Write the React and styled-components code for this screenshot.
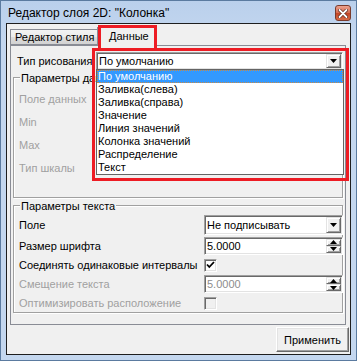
import React from "react";
import styled, { createGlobalStyle } from "styled-components";

const GlobalStyle = createGlobalStyle`
  html, body { margin: 0; padding: 0; background: #fff; }
  body {
    font-family: "Liberation Sans", Arial, sans-serif;
    font-size: 11px;
    color: #000;
  }
`;

const Window = styled.div`
  position: relative;
  width: 357px;
  height: 361px;
  box-sizing: border-box;
  border: 1px solid #5b7ba0;
  background: linear-gradient(#bad0ec, #c4d7ef 40px);
  display: flex;
  flex-direction: column;
`;

const TitleBar = styled.div`
  height: 22px;
  display: flex;
  align-items: flex-start;
  justify-content: space-between;
  padding: 0 5px 0 7px;
`;

const Title = styled.span`
  font-size: 12px;
  line-height: 22px;
  padding-top: 1px;
  color: #000;
`;

const CloseButton = styled.div`
  width: 16px;
  height: 16px;
  margin-top: 4px;
  display: grid;
  place-items: center;
  box-sizing: border-box;
  border: 1px solid #7a3b2c;
  border-radius: 3px;
  background: linear-gradient(#eba28f, #d5694d 50%, #c24526 51%, #d76a45);
`;

const Client = styled.div`
  flex: 1;
  margin: 0 5px 5px;
  border: 1px solid #1e1e1e;
  background: #f0f0f0;
  display: flex;
  flex-direction: column;
`;

const TabStrip = styled.div`
  height: 21px;
  display: flex;
  align-items: flex-end;
  padding: 0 0 0 3px;
  position: relative;
  z-index: 1;
`;

const Tab = styled.div`
  box-sizing: border-box;
  height: ${({ $active }) => ($active ? 19 : 16)}px;
  width: ${({ $w }) => $w}px;
  margin-bottom: ${({ $active }) => ($active ? -1 : 0)}px;
  margin-left: ${({ $active }) => ($active ? -1 : 0)}px;
  padding-left: ${({ $pad }) => $pad}px;
  border: 1px solid #898c95;
  border-bottom: ${({ $active }) => ($active ? "none" : "1px solid #898c95")};
  background: ${({ $active }) =>
    $active ? "#f0f0f0" : "linear-gradient(#f3f3f3, #ebebeb 50%, #dddddd 51%, #d2d2d2)"};
  line-height: ${({ $active }) => ($active ? 17 : 15)}px;
  white-space: nowrap;
`;

const Panel = styled.div`
  position: relative;
  height: 280px;
  box-sizing: border-box;
  margin: 0 4px 0 3px;
  border: 1px solid #898c95;
  background: #f0f0f0;
  display: flex;
  flex-direction: column;
  padding: 0 1px;
`;

const TypeRow = styled.div`
  display: flex;
  align-items: center;
  height: 18px;
  margin-top: 6px;
  padding-left: 5px;
  position: relative;
  z-index: 2;
`;

const Label = styled.span`
  color: ${({ $disabled }) => ($disabled ? "#a0a0a0" : "#000")};
  width: ${({ $w }) => ($w ? `${$w}px` : "auto")};
  flex: none;
  white-space: nowrap;
`;

const Field = styled.div`
  position: relative;
  flex: ${({ $grow }) => ($grow ? 1 : "none")};
  width: ${({ $w }) => ($w ? `${$w}px` : "auto")};
  height: ${({ $h }) => $h}px;
  margin-right: ${({ $mr }) => $mr || 0}px;
  box-sizing: border-box;
  display: flex;
  align-items: center;
  justify-content: space-between;
  background: #fff;
  border: 1px solid;
  border-color: #a0a0a0 #fff #fff #a0a0a0;
  box-shadow: inset 1px 1px 0 #696969, inset -1px -1px 0 #e3e3e3;
  padding: 0 1px 0 2px;
  color: ${({ $disabled }) => ($disabled ? "#8d8d8d" : "#000")};
`;

const ArrowButton = styled.div`
  width: 15px;
  height: ${({ $h }) => $h}px;
  box-sizing: border-box;
  background: #f0f0f0;
  border: 1px solid;
  border-color: #e3e3e3 #696969 #696969 #e3e3e3;
  box-shadow: inset 1px 1px 0 #fff, inset -1px -1px 0 #a0a0a0;
  display: grid;
  place-items: center;
`;

const SpinButtons = styled.div`
  display: flex;
  flex-direction: column;
`;

const DropList = styled.div`
  position: absolute;
  top: 100%;
  left: -1px;
  width: calc(100% + 3px);
  box-sizing: border-box;
  border: 1px solid #646464;
  background: #fff;
  padding: 0;
`;

const Option = styled.div`
  height: 13px;
  line-height: 13px;
  padding-left: 1px;
  white-space: nowrap;
  background: ${({ $selected }) => ($selected ? "#3399ff" : "transparent")};
  color: ${({ $selected }) => ($selected ? "#fff" : "#000")};
  outline: ${({ $selected }) => ($selected ? "1px dotted #c98a45" : "none")};
  outline-offset: -1px;
`;

const GroupBox = styled.div`
  box-sizing: border-box;
  height: ${({ $h }) => $h}px;
  margin: ${({ $mt }) => $mt}px 1px 0;
  border: 1px solid #a0a0a0;
  box-shadow: inset 1px 1px 0 #fff, 1px 1px 0 #fff;
  display: flex;
  flex-direction: column;
  padding: 0 1px 0 5px;
`;

const GroupTitle = styled.div`
  align-self: flex-start;
  margin: -7px 0 0 1px;
  padding: 0 1px;
  line-height: 14px;
  background: #f0f0f0;
  white-space: nowrap;
`;

const DataRows = styled.div`
  display: grid;
  grid-auto-rows: 23px;
  align-items: center;
  margin-top: 2px;
`;

const TextRows = styled.div`
  display: grid;
  grid-template-columns: 185px 139px;
  grid-template-rows: 21px 21px 18px 20px 18px;
  align-items: center;
  margin-top: 1px;
`;

const CheckBox = styled.div`
  width: 13px;
  height: 13px;
  box-sizing: border-box;
  border: 1px solid;
  border-color: #a0a0a0 #fff #fff #a0a0a0;
  box-shadow: inset 1px 1px 0 #696969, inset -1px -1px 0 #e3e3e3;
  background: ${({ $disabled }) => ($disabled ? "#f0f0f0" : "#fff")};
  display: grid;
  place-items: center;
`;

const BottomBar = styled.div`
  flex: 1;
  display: flex;
  justify-content: flex-end;
  align-items: flex-start;
  padding: 2px 1px 0 0;
`;

const Button = styled.div`
  width: 73px;
  height: 25px;
  box-sizing: border-box;
  border: 1px solid;
  border-color: #fff #696969 #696969 #fff;
  box-shadow: inset -1px -1px 0 #a0a0a0, inset 1px 1px 0 #e3e3e3;
  background: #f0f0f0;
  display: grid;
  place-items: center;
`;

const Highlight = styled.div`
  position: absolute;
  left: ${({ $x }) => $x}px;
  top: ${({ $y }) => $y}px;
  width: ${({ $w }) => $w}px;
  height: ${({ $h }) => $h}px;
  box-sizing: border-box;
  border: 3px solid #ed1c24;
  pointer-events: none;
  z-index: 5;
`;

const Down = () => (
  <svg width="7" height="4" viewBox="0 0 7 4">
    <path d="M0 0h7L3.5 4z" fill="#000" />
  </svg>
);

const Up = () => (
  <svg width="7" height="4" viewBox="0 0 7 4">
    <path d="M0 4h7L3.5 0z" fill="#000" />
  </svg>
);

const Combo = ({ value, h = 18, w, grow, mr, children }) => (
  <Field $h={h} $w={w} $grow={grow} $mr={mr}>
    <span>{value}</span>
    <ArrowButton $h={h - 4}>
      <Down />
    </ArrowButton>
    {children}
  </Field>
);

const Spin = ({ value, disabled }) => (
  <Field $h={18} $w={139} $disabled={disabled}>
    <span>{value}</span>
    <SpinButtons>
      <ArrowButton $h={7}>
        <Up />
      </ArrowButton>
      <ArrowButton $h={7}>
        <Down />
      </ArrowButton>
    </SpinButtons>
  </Field>
);

const options = [
  "По умолчанию",
  "Заливка(слева)",
  "Заливка(справа)",
  "Значение",
  "Линия значений",
  "Колонка значений",
  "Распределение",
  "Текст",
];

export default function App() {
  return (
    <>
      <GlobalStyle />
      <Window>
        <TitleBar>
          <Title>Редактор слоя 2D: "Колонка"</Title>
          <CloseButton>
            <svg width="10" height="9" viewBox="0 0 10 9">
              <path
                d="M1.5 1l7 7M8.5 1l-7 7"
                stroke="#5a2418"
                strokeWidth="3.2"
                strokeLinecap="round"
              />
              <path
                d="M1.5 1l7 7M8.5 1l-7 7"
                stroke="#fff"
                strokeWidth="1.8"
                strokeLinecap="round"
              />
            </svg>
          </CloseButton>
        </TitleBar>
        <Client>
          <TabStrip>
            <Tab $w={88} $pad={4}>
              Редактор стиля
            </Tab>
            <Tab $active $w={58} $pad={11}>
              Данные
            </Tab>
          </TabStrip>
          <Panel>
            <TypeRow>
              <Label $w={79}>Тип рисования</Label>
              <Combo value="По умолчанию" grow mr={1}>
                <DropList>
                  {options.map((o, i) => (
                    <Option key={o} $selected={i === 0}>
                      {o}
                    </Option>
                  ))}
                </DropList>
              </Combo>
            </TypeRow>
            <GroupBox $h={121} $mt={7}>
              <GroupTitle>Параметры данных</GroupTitle>
              <DataRows>
                <Label $disabled>Поле данных</Label>
                <Label $disabled>Min</Label>
                <Label $disabled>Max</Label>
                <Label $disabled>Тип шкалы</Label>
              </DataRows>
            </GroupBox>
            <GroupBox $h={108} $mt={7}>
              <GroupTitle>Параметры текста</GroupTitle>
              <TextRows>
                <Label>Поле</Label>
                <Combo value="Не подписывать" h={20} w={139} />
                <Label>Размер шрифта</Label>
                <Spin value="5.0000" />
                <Label>Соединять одинаковые интервалы</Label>
                <CheckBox>
                  <svg width="9" height="8" viewBox="0 0 9 8">
                    <path d="M1 3.5l2.3 2.5L8 1" stroke="#000" strokeWidth="1.8" fill="none" />
                  </svg>
                </CheckBox>
                <Label $disabled>Смещение текста</Label>
                <Spin value="5.0000" disabled />
                <Label $disabled>Оптимизировать расположение</Label>
                <CheckBox $disabled />
              </TextRows>
            </GroupBox>
          </Panel>
          <BottomBar>
            <Button>Применить</Button>
          </BottomBar>
        </Client>
        <Highlight $x={97} $y={24} $w={59} $h={26} />
        <Highlight $x={91} $y={47} $w={257} $h={133} />
      </Window>
    </>
  );
}
